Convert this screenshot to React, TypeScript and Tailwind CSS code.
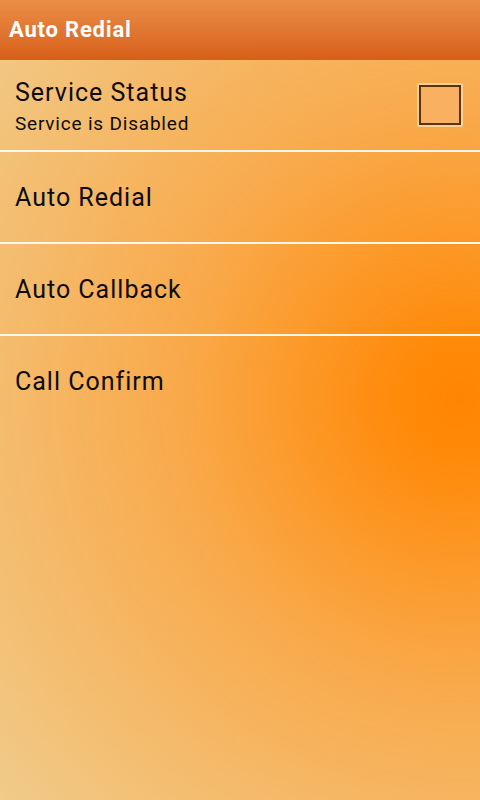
const rows = ["Auto Redial", "Auto Callback", "Call Confirm"];

function Divider() {
  return <div className="h-[2px] bg-[#fff6ec]" />;
}

export default function App() {
  return (
    <div className="w-[480px] h-[800px] flex flex-col overflow-hidden font-['Roboto','Liberation_Sans',sans-serif] text-[#0c0c0c]">
      {/* Title bar */}
      <div className="h-[60px] shrink-0 flex items-center pl-[9px] bg-gradient-to-b from-[#ea8e47] to-[#d75f17]">
        <span className="text-[22px] font-bold text-white leading-none tracking-[0.8px]">Auto Redial</span>
      </div>

      {/* Preference list */}
      <div className="flex-1 bg-[radial-gradient(circle_at_460px_340px,#ff8500_0px,#ff8a0a_60px,#f9a94a_280px,#f0cc8c_620px)]">
        <div className="h-[90px] flex items-center justify-between pl-[15px] pr-[17px]">
          <div className="pt-[4px]">
            <div className="text-[25px] leading-[28px] tracking-[1px]">Service Status</div>
            <div className="text-[19px] leading-[22px] mt-[6px] tracking-[0.8px]">Service is Disabled</div>
          </div>
          <div className="w-[46px] h-[44px] border-2 border-[#fbcf98] rounded-[2px]">
            <div className="w-full h-full border-2 border-[#5a3410] bg-[#f9b060]" />
          </div>
        </div>
        <Divider />
        {rows.map((label, idx) => (
          <div key={label}>
            <div className="h-[90px] flex items-center pl-[15px] pt-[2px]">
              <span className="text-[25px] leading-[28px] tracking-[1px]">{label}</span>
            </div>
            {idx < rows.length - 1 && <Divider />}
          </div>
        ))}
      </div>
    </div>
  );
}
